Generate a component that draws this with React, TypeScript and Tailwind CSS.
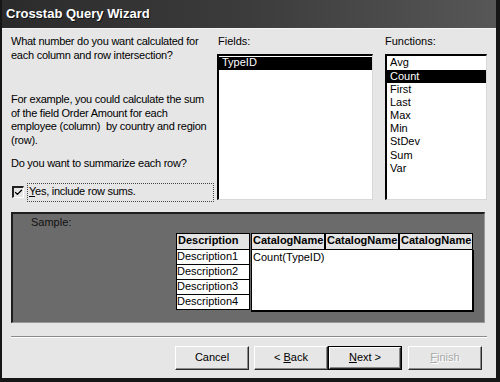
import { Check } from 'lucide-react';

const functions = ['Avg', 'Count', 'First', 'Last', 'Max', 'Min', 'StDev', 'Sum', 'Var'];
const descRows = ['Description1', 'Description2', 'Description3', 'Description4'];

function WizButton({
  children,
  isDefault,
  disabled,
}: {
  children: React.ReactNode;
  isDefault?: boolean;
  disabled?: boolean;
}) {
  const inner = (
    <div
      className={`h-full w-full flex items-center justify-center bg-[#e6e6e6] border border-t-white border-l-white border-r-[#2a2a2a] border-b-[#2a2a2a] shadow-[inset_-1px_-1px_0_#8a8a8a] ${
        disabled ? 'text-[#a8a8a8] [text-shadow:1px_1px_0_#fff]' : 'text-black'
      }`}
    >
      {children}
    </div>
  );
  if (isDefault) {
    return <div className="w-[74px] h-[24px] border border-black">{inner}</div>;
  }
  return <div className="w-[74px] h-[24px]">{inner}</div>;
}

export default function App() {
  return (
    <div className="w-[500px] h-[382px] flex flex-col bg-[#e6e6e6] font-['Liberation_Sans',Arial,sans-serif] text-[11px] leading-[13.5px] text-black border-l-2 border-r-4 border-b-4 border-[#161616] overflow-hidden">
      {/* Title bar */}
      <div className="h-[28px] shrink-0 flex items-center pl-[4px] bg-gradient-to-r from-[#2b2b2b] via-[#3c3c3c] to-[#575757]">
        <span className="text-white font-bold text-[13px] [text-shadow:1px_1px_0_#111]">
          Crosstab Query Wizard
        </span>
      </div>

      {/* Body */}
      <div className="flex-1 flex flex-col px-[9px] pt-[6px] border-t border-t-[#f4f4f4]">
        <div className="flex h-[166px]">
          {/* Left column */}
          <div className="w-[203px] flex flex-col whitespace-nowrap tracking-[-0.25px]">
            <p>
              What number do you want calculated for
              <br />
              each column and row intersection?
            </p>
            <p className="mt-[31px]">
              For example, you could calculate the sum
              <br />
              of the field Order Amount for each
              <br />
              employee (column)&nbsp; by country and region
              <br />
              (row).
            </p>
            <p className="mt-[10px]">Do you want to summarize each row?</p>
            <div className="mt-[12px] flex items-center h-[19px]">
              <div className="w-[12px] h-[12px] ml-[1px] border-l-2 border-t-2 border-[#222] border-r border-b border-r-white border-b-white bg-[#e6e6e6] flex items-center justify-center">
                <Check size={11} strokeWidth={3.5} className="text-black -mt-[1px]" />
              </div>
              <div className="ml-[3px] h-[19px] flex-1 border border-dotted border-[#444] flex items-center pl-[1px]">
                <span>
                  <span className="underline">Y</span>es, include row sums.
                </span>
              </div>
            </div>
          </div>

          {/* Fields */}
          <div className="ml-[3px] w-[156px] flex flex-col">
            <span className="pl-[1px]">Fields:</span>
            <div className="mt-[5px] h-[146px] bg-white border-l-2 border-t-2 border-black border-r border-b border-r-[#d8d8d8] border-b-[#d8d8d8] pt-[1px]">
              <div className="h-[13px] bg-black text-white pl-[3px] flex items-center">TypeID</div>
            </div>
          </div>

          {/* Functions */}
          <div className="ml-[12px] w-[102px] flex flex-col">
            <span>Functions:</span>
            <div className="mt-[5px] h-[146px] bg-white border-l-2 border-t-2 border-black border-r border-b border-r-[#d8d8d8] border-b-[#d8d8d8] pt-[1px]">
              {functions.map((f) => (
                <div
                  key={f}
                  className={`h-[13.2px] pl-[3px] flex items-center ${
                    f === 'Count' ? 'bg-black text-white' : ''
                  }`}
                >
                  {f}
                </div>
              ))}
            </div>
          </div>
        </div>

        {/* Sample panel */}
        <div className="mt-[11px] w-[474px] h-[111px] bg-[#6b6b6b] border-l-2 border-t-2 border-[#1e1e1e] border-r border-b border-r-[#9a9a9a] border-b-[#9a9a9a] flex flex-col">
          <span className="pl-[18px] pt-[2px] text-[#111]">Sample:</span>
          <div className="ml-[163px] mt-[3px] flex">
            <div className="flex flex-col w-[74px]">
              <div className="h-[17px] bg-[#e4e4e4] border border-black flex items-center pl-[1px] font-bold">
                Description
              </div>
              {descRows.map((d) => (
                <div
                  key={d}
                  className="h-[15px] bg-white border border-t-0 border-black flex items-center"
                >
                  {d}
                </div>
              ))}
            </div>
            <div className="flex flex-col w-[223px] ml-[1px]">
              <div className="flex">
                {[0, 1, 2].map((i) => (
                  <div
                    key={i}
                    className="w-[74px] h-[17px] bg-[#e4e4e4] border border-black flex items-center pl-[1px] font-bold overflow-hidden whitespace-nowrap"
                  >
                    CatalogName
                  </div>
                ))}
              </div>
              <div className="h-[62px] bg-white border border-t-0 border-black border-r-2 border-b-2 pl-[1px] pt-[1px]">
                Count(TypeID)
              </div>
            </div>
          </div>
        </div>

        {/* Separator */}
        <div className="mt-[13px] w-[476px] border-t border-t-[#8c8c8c] border-b border-b-white" />

        {/* Buttons */}
        <div className="mt-[8px] ml-[164px] flex">
          <WizButton>Cancel</WizButton>
          <div className="ml-[5px]">
            <WizButton>
              &lt; <span className="underline ml-[3px]">B</span>ack
            </WizButton>
          </div>
          <WizButton isDefault>
            <span className="underline">N</span>ext &gt;
          </WizButton>
          <div className="ml-[6px]">
            <WizButton disabled>
              <span className="underline">F</span>inish
            </WizButton>
          </div>
        </div>
      </div>
    </div>
  );
}
